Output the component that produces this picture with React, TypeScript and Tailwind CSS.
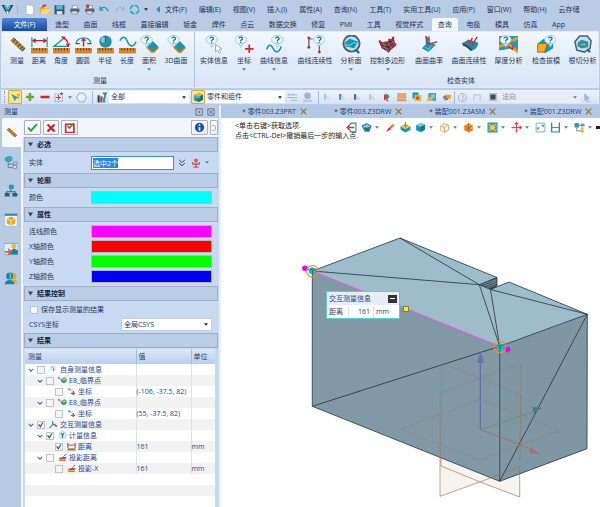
import { useEffect, useRef, type ReactNode } from "react";
import clsx from "clsx";

const TEAL = "#1497b5";

function Svg({ s = 12, children, className }: { s?: number; children: ReactNode; className?: string }) {
  return (
    <svg viewBox="0 0 20 20" width={s} height={s} fill="none" className={clsx("shrink-0", className)} aria-hidden="true">
      {children}
    </svg>
  );
}

function Ruler() {
  return (
    <>
      <rect x="1.5" y="14" width="17" height="5" fill="#e88a1c" stroke="#a35f14" strokeWidth=".5" />
      <path d="M4 14v2.500M7 14v2.500M10 14v2.500M13 14v2.500M16 14v2.500" stroke="#4b3512" strokeWidth="1" />
    </>
  );
}

function Query({ x = 8, y = 5 }: { x?: number; y?: number }) {
  return (
    <g transform={`translate(${x} ${y})`}>
      <path d="M-2 3.500 0 8 2.500 3.500Z" fill="#e6f6fc" stroke="#7fb9d2" strokeWidth=".6" />
      <ellipse rx="6" ry="4.500" fill="#e6f6fc" stroke="#7fb9d2" strokeWidth=".7" />
      <path d="M-1.800-1.200C-1.800-3.600 2.200-3.200 1.800-1 1.600 0 0 0 0 1.300M0 2.200v1.200" stroke="#155f80" strokeWidth="1.200" />
    </g>
  );
}

function DiagonalRuler() {
  return (
    <>
      <path d="M3 6 6 3 18 14 15 17Z" fill="#e88a1c" stroke="#7a5a28" strokeWidth=".8" />
      <path d="m8 4.500-2.500 2.500M10.500 7 8 9.500M13 9.500 10.500 12M15.500 12 13 14.500M17.500 14 15 16.500" stroke="#245a61" strokeWidth="1.300" />
    </>
  );
}

function Surface() {
  return (
    <>
      <path d="m13.500 7 5.500 5.500-5.500 5.500L8 12.500Z" fill={TEAL} stroke="#0c647d" strokeWidth=".8" />
      <path d="m7 12.500 6 6M19.500 13l-5.500 5.500" stroke="#db831e" strokeWidth="1.800" />
    </>
  );
}

function Cube({ c = TEAL, t = "#6fd0e2" }: { c?: string; t?: string }) {
  return (
    <>
      <path d="m2 6 9-4 7 3v9l-8 4-8-3Z" fill={c} />
      <path d="m2 6 9-4 7 3-8 4Z" fill={t} />
      <path d="m10 9 8-4v9l-8 4Z" fill="#0b6480" opacity=".7" />
    </>
  );
}

const ribbonIcons: Record<string, ReactNode> = {
  测量: <DiagonalRuler />,
  距离: <><Ruler /><path d="M2 2v11M18 2v11" stroke={TEAL} strokeWidth="1.200" /><path d="M3 6h14M6 4 3 6l3 2M14 4l3 2-3 2" stroke="#c81e2b" strokeWidth="1.300" /></>,
  角度: <><Ruler /><path d="M14 2 2 12h16" stroke={TEAL} strokeWidth="1.400" /><path d="M11 3c4 1 6 4 6 8M10 2l3.500.5M15 9.500l2.200 2 1.200-2.500" stroke="#d3202c" strokeWidth="1.400" /></>,
  圆弧: <><Ruler /><path d="M2 9C4 1 16 1 18 9" stroke={TEAL} strokeWidth="1.400" /><path d="M10 4v8M2 9h4M14 9h4M10 4 8 6M10 4l2 2" stroke="#c81e2b" strokeWidth="1.400" /></>,
  半径: <><Ruler /><circle cx="10" cy="7" r="6.500" fill={TEAL} /><circle cx="8" cy="5" r="3" fill="#74cfe3" /><path d="M10 1v7" stroke="#d3202c" strokeWidth="1.500" /></>,
  长度: <><Ruler /><path d="M2 6c3-6 6-4 8 1s6 7 9 0" stroke={TEAL} strokeWidth="1.500" /></>,
  面积: <><Surface /><Query x={7} /></>,
  "3D曲面": <><Surface /><Query x={7} /></>,
  实体信息: <><Query x={7} /><path d="M11 10v8l2.300-2 1.700 3.500 1.500-1L15 15l3-.5Z" fill="#fff" stroke="#8798a8" strokeWidth=".8" /></>,
  坐标: <><Query x={6} /><path d="M15 10v9M10.500 14.500h9" stroke="#d22630" strokeWidth="1.800" /></>,
  曲线信息: <><path d="M2 15c2-7 5-4 7 0s6 4 8-3" stroke={TEAL} strokeWidth="1.700" /><Query x={13} /></>,
  曲线连续性: <><Query x={14} /><path d="M3 14V4h4M14 11v7" stroke="#26a0b8" strokeWidth="1.300" /><path d="M3 4v9M14 12v6" stroke="#cf2935" strokeWidth=".8" /><g fill="#cf2935"><circle cx="3" cy="3" r="1.500" /><circle cx="3" cy="13" r="1.500" /><circle cx="14" cy="18" r="1.500" /></g></>,
  分析面: <><circle cx="10" cy="9" r="8.500" fill="#bce3ec" stroke="#555e65" strokeWidth="2" /><path d="m3 8 5-4 9 3-4 7-9-2Z" fill={TEAL} /><path d="m4 10 4 1 4-3 4 1" stroke="#7be0ed" /><path d="m15 16 3 3" stroke="#276f83" strokeWidth="2.500" /></>,
  控制多边形: <><path d="m1 7 7 1 8-5 3 8-8 7-7-4Z" fill="#64282f" /><path d="m3 9 7 2 8-5M4 12l7 3 7-6M5 8l5 9M10 7l5 8M14 5l4 6" stroke="#5ba1ad" strokeWidth=".8" /><g fill="#e1202c"><circle cx="2" cy="7" r="1.400" /><circle cx="8" cy="8" r="1.400" /><circle cx="12" cy="5" r="1.400" /><circle cx="16" cy="3" r="1.400" /><circle cx="18" cy="10" r="1.400" /><circle cx="14" cy="12" r="1.400" /><circle cx="11" cy="17" r="1.400" /><circle cx="5" cy="13" r="1.400" /></g></>,
  曲面曲率: <><path d="m6 3 4-2 1 8 6 1-8 8-7-4 4-4Z" fill={TEAL} /><path d="m5 13 5 2M7 7l3-1M12 10l-4 8" stroke="#7ed1df" strokeWidth=".8" /><path d="M6 1c1 4 2 7 3 9l9-3" stroke="#cf2935" strokeWidth="1.600" /></>,
  曲面连续性: <><path d="M1 9 10 5l9 3c0 5-3 8-8 9-2-5-6-7-10-8Z" fill={TEAL} /><path d="M3 10c4 1 6 3 9 6" stroke="#24485a" strokeWidth="2" /><path d="m6 9 3-4M9 11l4-8M12 12l6-10" stroke="#cf2935" strokeWidth="1.400" /></>,
  厚度分析: <><path d="M0 1h20v17l-7-4c-4 0-6 2-13 2Z" fill="#2299b5" /><path d="M0 12c8-3 9-2 13 0l7 6M14 6l6-3" stroke="#e99b22" strokeWidth="3" /><path d="m10 12 4 3 1-4" stroke="#d12b2d" strokeWidth="1.500" /><Query x={7} /></>,
  检查拔模: <><path d="m1 9 6-5 10 3v7l-8 5-8-3Z" fill={TEAL} /><path d="M1 9h10l-3 9H0Z" fill="#f5ad24" stroke="#ae6518" /><Query x={14} /></>,
  根切分析: <><path d="m2 7 5-6h8l4 5-1 8-6 4-8-2Z" fill="#bfe3ec" stroke="#535e65" strokeWidth="1.600" /><path d="m5 8 4-3 7 2v6l-7 1-4-2Z" fill={TEAL} /><path d="M8 9h6v2H8Z" fill="#ef8b24" /><path d="m15 15 3 3" stroke="#276f83" strokeWidth="2.500" /></>,
};

const group1: [string, string, boolean?][] = [
  ["测量", "w-[22px]"], ["距离", "w-[22px]"], ["角度", "w-[22px]"], ["圆弧", "w-[22px]"],
  ["半径", "w-[22px]"], ["长度", "w-[22px]"], ["面积", "w-[22px]", true], ["3D曲面", "w-[32px]"],
];
const group2: [string, string, boolean?][] = [
  ["实体信息", "w-[38px]"], ["坐标", "w-[22px]", true], ["曲线信息", "w-[38px]", true], ["曲线连续性", "w-[44px]"],
  ["分析面", "w-[28px]", true], ["控制多边形", "w-[45px]", true], ["曲面曲率", "w-[38px]"], ["曲面连续性", "w-[42px]"],
  ["厚度分析", "w-[37px]"], ["检查拔模", "w-[38px]"], ["根切分析", "w-[35px]"],
];

function Caret({ dark }: { dark?: boolean }) {
  return (
    <svg viewBox="0 0 6 4" width="4" height="3" className="shrink-0" aria-hidden="true">
      <path d="M0 0h6L3 4Z" fill={dark ? "#1c2b40" : "#5580b5"} />
    </svg>
  );
}

function RibbonItems({ items }: { items: [string, string, boolean?][] }) {
  return (
    <div className="flex h-[42px]">
      {items.map(([label, width, menu]) => (
        <button key={label} className={clsx("flex shrink-0 flex-col items-center pt-[3px]", width)}>
          <Svg s={19}>{ribbonIcons[label]}</Svg>
          <span className="mt-[2px] leading-[10px] whitespace-nowrap">{label}</span>
          {menu && <span className="mt-[2px]"><Caret /></span>}
        </button>
      ))}
    </div>
  );
}

const menus = ["文件(F)", "编辑(E)", "视图(V)", "插入(I)", "属性(A)", "查询(N)", "工具(T)", "实用工具(U)", "应用(P)", "窗口(W)", "帮助(H)", "云存储"];
const tabs = ["造型", "曲面", "线框", "直接编辑", "钣金", "焊件", "点云", "数据交换", "修复", "PMI", "工具", "视觉样式", "查询", "电极", "模具", "仿真", "App"];

const printer = (
  <>
    <path d="M6 8V3h9v5" fill="#fff" stroke="#667" />
    <rect x="2" y="8" width="17" height="7" rx="2" fill="#5c6572" />
    <path d="M5 13h10v5H5Z" fill="#e7e9ec" stroke="#667" />
  </>
);
const quickIcons: [string, ReactNode][] = [
  ["新建", <path d="M4 2h9l4 4v13H4Z" fill="#fff" stroke="#9aacbf" />],
  ["打开", <><path d="M1 6h6l2 2h9v10H3Z" fill="#f2a91e" /><path d="m4 11 3-2h12l-2 9H4Z" fill="#ffdb60" /><path d="M7 7C7 2 10 2 13 3" stroke="#db2828" strokeWidth="3" /></>],
  ["保存", <><path d="M1 2h18v17H1Z" fill="#3c5268" /><path d="M4 2h12v8H4Z" fill="#58b2d3" /><path d="M5 13h10v6H5Z" fill="#dceaf2" /></>],
  ["打印", printer],
  ["打印预览", <>{printer}<path d="M4 1h5v6H4Z" fill="#d5312e" /></>],
  ["撤销", <path d="M2 10C7 4 13 5 17 13M2 4v7h6" stroke="#1aa3ba" strokeWidth="2.400" />],
  ["重做", <path d="M18 10C13 4 7 5 3 13M18 4v7h-6" stroke="#a4b4c8" strokeWidth="2" />],
  ["刷新", <><circle cx="10" cy="10" r="7.500" stroke="#24a5c4" strokeWidth="2.600" strokeDasharray="9 2.700" /></>],
];

function TitleBar() {
  return (
    <header className="flex h-[18px] items-center">
      <Svg s={13} className="ml-[1px]">
        <path d="M1 3h5l4 5 4-5h5l-5 9-4 6-4-6Z" fill="#173f55" />
        <path d="M4 4h3l3 4 3-4h3l-4 7H8Z" fill="#38b7d0" />
        <path d="m8 12 4 1-2 6Z" fill="#f4fafc" />
      </Svg>
      <span className="ml-[3px] h-2 w-px bg-[#9bb0cc]" />
      <div className="ml-[4px] flex">
        {quickIcons.map(([name, icon]) => (
          <button key={name} aria-label={name} className="flex w-[15px] justify-center"><Svg s={11}>{icon}</Svg></button>
        ))}
      </div>
      <button aria-label="自定义" className="flex w-2 justify-center"><Caret dark /></button>
      <button aria-label="收起" className="ml-1 flex w-2 justify-center">
        <svg viewBox="0 0 5 8" width="4" height="7"><path d="M5 0v8L0 4Z" fill="#1599cf" /></svg>
      </button>
      <nav className="ml-[3px] flex gap-3 whitespace-nowrap">
        {menus.map((m) => <button key={m}>{m}</button>)}
      </nav>
    </header>
  );
}

function TabBar() {
  return (
    <nav className="flex h-[13px] pl-[2px]">
      <button className="w-[45px] rounded-t-[2px] bg-linear-to-b from-[#4f86d6] to-[#1748a5] text-white">文件(F)</button>
      <div className="flex w-[524px] justify-between pl-[2px] whitespace-nowrap">
        {tabs.map((t) => (
          <button key={t} className={clsx("px-[6px]", t === "查询" && "rounded-t-[2px] bg-[#f4f8fd]")}>{t}</button>
        ))}
      </div>
    </nav>
  );
}

const filterIcons: [string, ReactNode][] = [
  ["过滤列表", <><path d="M3 3h5v14H3Z" fill="#b0b9c4" /><path d="m10 8 7 7-4 1Z" stroke="#bac2cb" /></>],
  ["过滤实体", <><path d="M3 3h5v14H3Z" fill="#25a3ad" /><path d="M3 3h5v5H3Z" fill="#cc4d48" /><path d="m10 8 7 7-4 1Z" stroke="#a7b5c2" /></>],
  ["过滤面", <><path d="M3 3h5v14H3Z" fill="#ce3c42" /><path d="M3 3h3v14H3Z" fill="#297c8e" /><path d="m10 8 7 7-4 1Z" stroke="#a7b5c2" /></>],
  ["过滤边", <><path d="M3 3h5v14H3Z" fill="#b7c0ca" /><path d="m10 8 7 7-4 1Z" stroke="#a7b5c2" /></>],
  ["拾取", <><path d="m4 4 11 8-5 1 3 5-3 1-2-5-4 3Z" fill="#d4313d" /><path d="m7 2 9 7-5 1-2 3Z" fill="#1597b4" /></>],
  ["选项列表", <path d="M1 3h17v4H1ZM1 9h17v3H1ZM1 14h17v4H1Z" fill="#ecb24a" stroke="#d75645" strokeWidth=".7" />],
  ["图层", <><path d="M1 1h12v12H1Z" fill="#2496b0" /><path d="M5 6h13v12H5Z" fill="#f6b438" /><circle cx="11" cy="12" r="3.500" fill="#d6493a" /></>],
  ["着色", <><path d="M3 2h15v16H1Z" fill="#3ba9bf" /><path d="M2 10h9v8H2Z" fill="#f4ae38" /><circle cx="12" cy="8" r="4" fill="#87d0ce" /></>],
  ["关联", <><path d="m1 10 7-5 5 9-7 4Z" fill="#e6782c" /><path d="m10 5 9 1-3 9-6-2Z" fill="#eda331" /><path d="m4 8 8 8" stroke="#267d9b" strokeWidth="2" /></>],
];

function SelectBox({ label, value, className, muted }: { label: string; value: string; className: string; muted?: boolean }) {
  return (
    <div className={clsx("relative flex shrink-0 items-center", muted ? "bg-[#e9edf3] text-[#858b96]" : "bg-white", className)}>
      <select aria-label={label} defaultValue={value} className="h-full w-full appearance-none bg-transparent pr-2 pl-[2px] leading-[10px] outline-none">
        <option>{value}</option>
      </select>
      <span className="pointer-events-none absolute right-[3px] flex"><Caret dark={!muted} /></span>
    </div>
  );
}

function IconButton({ name, className, s = 11, children }: { name: string; className?: string; s?: number; children: ReactNode }) {
  return <button aria-label={name} className={clsx("flex shrink-0 items-center justify-center", className)}><Svg s={s}>{children}</Svg></button>;
}

function FilterBar() {
  return (
    <div className="flex h-[14px] items-center bg-linear-to-b from-[#edf3fb] to-[#d6e2f2] pl-[3px]">
      <span className="mr-[3px] h-3 border-l border-dotted border-[#8299b9]" />
      <IconButton name="选择" className="h-[14px] w-[14px] rounded-[1px] border border-[#dda93c] bg-[#ffe394]">
        <path d="m2 3 7 14 2-5 6-1Z" fill="#2ca1b6" /><path d="M12 3h7l-3 5v6" fill="#eda632" />
      </IconButton>
      <IconButton name="添加" className="w-[15px]" s={10}><path d="M10 2v16M2 10h16" stroke="#6aa536" strokeWidth="5" /></IconButton>
      <IconButton name="移除" className="w-[15px]" s={10}><path d="M1 10h18" stroke="#c92836" strokeWidth="5" /></IconButton>
      <IconButton name="框选" className="w-[14px]" s={10}><path d="M2 4h15v15H2Z" stroke="#74869f" /><path d="M9 6v10M4 11h10M15 1v5M12 3h6" stroke="#ce3641" strokeWidth="2" /></IconButton>
      <span className="mx-[2px]"><Caret /></span>
      <IconButton name="多边形" className="w-[15px]"><path d="M6 2h8l5 8-5 8H6l-5-8Z" fill="#e8f1fa" stroke="#6490b5" strokeWidth="1.300" /></IconButton>
      <span className="mx-[3px] h-[13px] w-px bg-[#a8b9d1]" />
      <IconButton name="过滤器" className="w-[13px]"><path d="M1 6h4v13H1Z" fill="#14526d" /><path d="M6 8h4v11H6Z" fill="#d22f3b" /><path d="M11 10h4v9h-4Z" fill="#2b9bb1" /><path d="M10 1h9l-3 5v5h-3V6Z" fill="#278aae" /></IconButton>
      <SelectBox label="过滤类型" value="全部" className="h-3 w-[80px]" />
      <IconButton name="零件过滤" className="ml-[2px] h-[14px] w-[14px] rounded-[1px] border border-[#dda93c] bg-[#ffe394]"><Cube c="#1688a4" t="#f0b02c" /><path d="m1 12 6-4 6 2" stroke="#43bed1" strokeWidth="3" /></IconButton>
      <SelectBox label="零件和组件过滤" value="零件和组件" className="h-3 w-[80px]" />
      <IconButton name="对齐" className="w-[15px]"><path d="M1 5h18M3 3v4M11 3v4M1 10h18M7 15h12" stroke="#aab5c5" strokeWidth="2" /></IconButton>
      <IconButton name="球体" className="w-[15px]"><circle cx="10" cy="7" r="6" fill="#a1b5cf" /><path d="M2 14h16v4H2Z" fill="#bac7da" /></IconButton>
      <span className="ml-[3px] h-[13px] w-px bg-[#a8b9d1]" />
      {filterIcons.map(([name, icon], i) => (
        <IconButton key={name} name={name} className="w-[15px]" s={i < 4 ? 8 : 10}>{icon}</IconButton>
      ))}
      <span className="h-[13px] w-px bg-[#a8b9d1]" />
      <IconButton name="定时" className="w-[15px]"><circle cx="10" cy="10" r="7.500" stroke="#a3abb6" strokeWidth="1.500" /><path d="m9 4 5 7-4 4V4" stroke="#a3abb6" /></IconButton>
      <IconButton name="曲线" className="w-[15px]" s={9}><path d="M2 17V4h7v4M11 4h5v13" stroke="#aab3bf" strokeWidth="1.700" /></IconButton>
      <IconButton name="停止" className="w-[15px]" s={10}><path d="M2 2h16v16H2Z" fill="#b8c2ce" /><path d="M5 5h10v10H5Z" fill="#424a57" /></IconButton>
      <SelectBox label="方向" value="法向" muted className="h-3 w-[80px]" />
      <IconButton name="拾取方向" className="w-[15px]"><path d="m4 2 11 10-5 1 2 5-3 1-2-5-3 3Z" fill="#a9b8cb" /><path d="m10 15 7 4" stroke="#a9b8cb" /></IconButton>
    </div>
  );
}

function Tick() {
  return (
    <svg viewBox="0 0 10 10" className="pointer-events-none absolute inset-px hidden size-[6px] peer-checked:block" fill="none" aria-hidden="true">
      <path d="m1 4 3 4 4-7" stroke="#35485f" strokeWidth="1.800" />
    </svg>
  );
}

function Check({ id, on }: { id: string; on?: boolean }) {
  return (
    <span className="relative flex size-2 shrink-0">
      <input id={id} type="checkbox" defaultChecked={on} className="peer size-2 appearance-none border border-[#bdc3cb] bg-[#f5f6f8]" />
      <Tick />
    </span>
  );
}

function Section({ title, children }: { title: string; children?: ReactNode }) {
  return (
    <section>
      <h2 className="flex h-[15px] items-center gap-1 border border-[#a0aebf] bg-[#b9cde7] pl-[3px] font-bold text-[#10213d]">
        <svg viewBox="0 0 6 5" width="5" height="5" aria-hidden="true"><path d="M0 0h6L3 5Z" fill="#3e4550" /></svg>
        {title}
      </h2>
      {children}
    </section>
  );
}

function ColorRow({ id, label, value }: { id: string; label: string; value: string }) {
  return (
    <div className="flex h-[15px] items-center">
      <label htmlFor={id} className="w-[67px] pl-[5px]">{label}</label>
      <input id={id} type="color" defaultValue={value} className="h-[13px] w-[121px] appearance-none border border-[#b3b8c2] [&::-webkit-color-swatch]:border-0 [&::-webkit-color-swatch-wrapper]:p-0" />
    </div>
  );
}

const pin = <><ellipse cx="9" cy="7" rx="7" ry="5" fill="#e3f2f9" stroke="#a5c8da" /><path d="m7 4 3 4v5" stroke="#2f829f" strokeWidth="2" /></>;
const critical = <><path d="m7 7 7-4 5 3v6l-6 4-6-3Z" fill="#1c9c9b" /><path d="m9 8 5-3 4 2-5 4Z" fill="#ebc53c" /><path d="m1 3 8 8" stroke="#4b6b82" strokeWidth="1.500" /><circle cx="2" cy="4" r="2" fill="#df4242" /></>;
const coord = <><path d="m3 2 5 6 5-2" stroke="#8ac0d8" strokeWidth="2" /><circle cx="5" cy="5" r="3" fill="#73b7d1" /><path d="M14 9v9M9 14h9" stroke="#df3c43" strokeWidth="3" /></>;
const project = <><path d="M3 10h14v8H3Z" fill="#bd5448" /><path d="M1 15h17" stroke="#e5b44c" strokeWidth="3" /><path d="M8 10h11M12 8l6-6" stroke="#cb3440" strokeWidth="2" /></>;

type TreeRow = { level: number; label: string; icon: ReactNode; checked?: boolean; leaf?: boolean; value?: string; unit?: string };
const rows: TreeRow[] = [
  { level: 0, label: "自身测量信息", icon: pin },
  { level: 1, label: "E8_临界点", icon: critical },
  { level: 2, label: "坐标", icon: coord, leaf: true, value: "(-106, -37.5, 82)" },
  { level: 1, label: "E8_临界点", icon: critical },
  { level: 2, label: "坐标", icon: coord, leaf: true, value: "(55, -37.5, 82)" },
  { level: 0, label: "交互测量信息", checked: true, icon: <><path d="M8 2v8l-7 8M9 9l9 5" stroke="#2295b1" strokeWidth="2.500" /><path d="m11 9 6 6" stroke="#d5424a" strokeWidth="3" /></> },
  { level: 1, label: "计量信息", checked: true, icon: <><circle cx="10" cy="9" r="8" fill="#dff1f8" stroke="#68a9c5" /><path d="m7 5 3 4 3-4M10 9v6" stroke="#16678a" strokeWidth="2.500" /></> },
  { level: 2, label: "距离", checked: true, leaf: true, value: "161", unit: "mm", icon: <><path d="M1 14h18v5H1Z" fill="#a87a3c" /><path d="M2 2v11M18 2v11" stroke="#28445b" strokeWidth="2" /><path d="M3 7h14" stroke="#ce3540" strokeWidth="2" /></> },
  { level: 1, label: "投影距离", icon: project },
  { level: 2, label: "投影-X", icon: project, leaf: true, value: "161", unit: "mm" },
];
const indents = ["pl-[2px]", "pl-[11px]", "pl-[20px]"];

function ResultTable() {
  return (
    <table className="mx-px mt-px w-[190px] table-fixed border-collapse text-left text-[#27448a]">
      <colgroup><col className="w-[111px]" /><col className="w-[55px]" /><col className="w-[24px]" /></colgroup>
      <thead>
        <tr className="h-[15px] bg-linear-to-b from-[#dce9f8] to-[#b9d0ec] text-[#2a3c58]">
          <th className="border-r border-[#a9bcd5] p-0 pl-[3px] font-normal">测量</th>
          <th className="border-r border-[#a9bcd5] p-0 pl-[2px] font-normal">值</th>
          <th className="p-0 pl-[2px] font-normal">单位</th>
        </tr>
      </thead>
      <tbody>
        {rows.map((r, i) => (
          <tr key={i} className="h-[11px] odd:bg-white even:bg-[#f2f2f3]">
            <td className="border-r border-[#dce1ec] p-0">
              <div className={clsx("flex h-[11px] items-center leading-[11px] whitespace-nowrap", indents[r.level])}>
                <span className="mr-[2px] flex w-2 justify-center">
                  {!r.leaf && <svg viewBox="0 0 8 5" width="6" height="4" fill="none"><path d="m1 1 3 3 3-3" stroke="#4372a5" strokeWidth="1.500" /></svg>}
                </span>
                <Check id={`row-${i}`} on={r.checked} />
                <label htmlFor={`row-${i}`} className="flex items-center gap-[2px] pl-1"><Svg s={9}>{r.icon}</Svg>{r.label}</label>
              </div>
            </td>
            <td className="border-r border-[#dce1ec] p-0 leading-[11px] whitespace-nowrap">{r.value}</td>
            <td className="p-0 leading-[11px]">{r.unit}</td>
          </tr>
        ))}
        {[0, 1, 2].map((n) => (
          <tr key={n} className="h-[11px] odd:bg-white even:bg-[#f2f2f3]"><td colSpan={3} className="p-0" /></tr>
        ))}
      </tbody>
    </table>
  );
}

const railIcons: [string, ReactNode][] = [
  ["管理器", <><path d="m1 4 6-3 5 2v5L6 11 1 8Z" fill="#38a5c4" /><path d="M6 11v7h6M6 13h8" stroke="#61738c" strokeWidth="1.200" /><path d="M14 10h5v3h-5ZM13 15h5v4h-5Z" fill="#dcebfa" stroke="#61738c" /></>],
  ["装配", <><path d="M7 1h7v6H7Z" fill="#1e9ab5" /><path d="M10 7v4M4 15v-4h12v4" stroke="#4a6078" strokeWidth="1.500" /><path d="M1 13h7v5H1ZM12 13h7v5h-7Z" fill="#245e80" /></>],
  ["视觉", <><path d="M1 1h18v18H1Z" fill="#eef8fc" stroke="#8dbdd0" /><path d="M1 1h18v3H1Z" fill="#298fae" /><path d="m4 8 6-3 6 3v7l-6 3-6-3Z" fill="#e9a51f" /><path d="m4 8 6 3 6-3M10 11v7" stroke="#fff4b9" strokeWidth="1.200" /></>],
  ["视图", <><path d="M0 2h20v16H0Z" fill="#dceffa" stroke="#6b9bb4" /><path d="m7 15 7-6 6 3v6H7Z" fill="#18849e" /><circle cx="14" cy="6" r="3.500" fill="#f2b33b" /><path d="M1 14h8M6 10l4 4-4 4" stroke="#e35d2d" strokeWidth="2.500" /></>],
  ["角色", <><circle cx="13" cy="7" r="5" fill="#e6a72c" /><path d="m8 17 4-5h4l4 6Z" fill="#e6a72c" /><circle cx="8" cy="7" r="5" fill="#1687a5" /><path d="M1 19c1-5 4-6 7-6s6 2 7 6Z" fill="#1687a5" /><path d="M7 4c3 0 3 5 1 7" stroke="#7dd2e1" strokeWidth="1.500" /></>],
];

function SidePanel() {
  const entity = useRef<HTMLInputElement>(null);
  useEffect(() => {
    entity.current?.focus();
    entity.current?.select();
  }, []);
  const tool = "h-[15px] rounded-[1px] border border-[#aab2bf] bg-linear-to-b from-white to-[#edf2f8]";
  return (
    <aside className="flex w-[221px] shrink-0 flex-col border-r-2 border-[#e8f0fa]">
      <div className="flex h-[13px] items-center pr-[2px] pl-1">
        <h1 className="grow">测量</h1>
        <IconButton name="停靠" className="w-3" s={8}><path d="M2 2h16v16H2Z" stroke="#50617b" strokeWidth="2" /><path d="M7 10h6M10 7v6" stroke="#50617b" strokeWidth="2" /></IconButton>
        <IconButton name="关闭" className="w-3" s={8}><path d="M2 2h16v16H2ZM5 5l10 10M15 5 5 15" stroke="#50617b" strokeWidth="2" /></IconButton>
      </div>
      <div className="flex grow">
        <nav className="flex w-[21px] shrink-0 flex-col bg-[#b8cbe5]">
          <button aria-label="测量" className="ml-[2px] flex h-[29px] items-center justify-center rounded-l-[2px] bg-[#f6f9fd]"><Svg s={13}><DiagonalRuler /></Svg></button>
          {railIcons.map(([name, icon]) => <IconButton key={name} name={name} className="h-[29px]" s={14}>{icon}</IconButton>)}
        </nav>
        <div className="min-w-0 grow border-l-2 border-[#f2f6fc] bg-[#c8daf1] pr-[1px] pl-px">
          <div className="-ml-px flex h-[19px] items-center bg-[#f2f6fb] pl-px">
            <IconButton name="确定" className={clsx(tool, "w-[17px]")}><path d="m2 10 5 6L18 4" stroke="#22a535" strokeWidth="3.500" /></IconButton>
            <IconButton name="取消" s={10} className={clsx(tool, "ml-[2px] w-[16px]")}><path d="m3 3 14 14M17 3 3 17" stroke="#d21e2b" strokeWidth="4.500" /></IconButton>
            <IconButton name="应用" className={clsx(tool, "ml-[2px] w-[17px]")}><path d="M3 4h15v15H3Z" fill="#fff" stroke="#d6252a" strokeWidth="3" /><path d="m6 7 4 4 8-9" stroke="#2ba33a" strokeWidth="3" /></IconButton>
            <IconButton name="信息" className={clsx(tool, "ml-auto w-[17px]")}><circle cx="10" cy="10" r="8.500" fill="#1855ad" /><path d="M10 4v3M10 9v7" stroke="#fff" strokeWidth="3" /></IconButton>
            <IconButton name="更多" className={clsx(tool, "ml-[2px] w-2")} s={6}><path d="M3 1h8c6 4 6 14 0 18H3" stroke="#d99145" strokeWidth="3" /></IconButton>
          </div>
          <Section title="必选">
            <div className="flex h-[21px] items-center">
              <label htmlFor="entity" className="w-[67px] pl-[5px]">实体</label>
              <input id="entity" ref={entity} defaultValue="选中2个" className="h-[14px] w-[83px] border border-[#3f8bd8] bg-white pl-[1px] leading-[12px] outline-none selection:bg-[#2388e8] selection:text-white" />
              <IconButton name="展开" className="ml-[3px] w-[10px]" s={8}><path d="m3 2 7 7 7-7M3 10l7 7 7-7" stroke="#263c57" strokeWidth="2.500" /></IconButton>
              <IconButton name="语音" className="ml-[3px] w-[11px]" s={10}><circle cx="10" cy="5" r="4" fill="#d55c62" /><path d="M3 8c0 7 14 7 14 0M10 9v9M5 18h10M2 12h16" stroke="#ce5660" strokeWidth="2.500" /></IconButton>
              <span className="ml-[4px]"><Caret /></span>
            </div>
          </Section>
          <Section title="轮廓"><div className="pt-[2px] pb-[2px]"><ColorRow id="outline" label="颜色" value="#00ffff" /></div></Section>
          <Section title="属性">
            <div className="pt-[2px] pb-[2px]">
              <ColorRow id="line" label="连线颜色" value="#ff00ff" />
              <ColorRow id="x-axis" label="X轴颜色" value="#ff0000" />
              <ColorRow id="y-axis" label="Y轴颜色" value="#00ff00" />
              <ColorRow id="z-axis" label="Z轴颜色" value="#0000ff" />
            </div>
          </Section>
          <Section title="结果控制">
            <div className="flex h-[17px] items-center gap-[3px] pl-[6px]">
              <Check id="keep" /><label htmlFor="keep">保存显示测量的结果</label>
            </div>
            <div className="flex h-[15px] items-start">
              <span className="w-[97px] pl-[5px] leading-[13px]">CSYS坐标</span>
              <SelectBox label="CSYS坐标" value="全局CSYS" className="h-[13px] w-[91px] border border-[#c3cfde]" />
            </div>
          </Section>
          <Section title="结果"><ResultTable /></Section>
        </div>
      </div>
    </aside>
  );
}

const viewIcons: [string, string, boolean, ReactNode][] = [
  ["退出", "w-[15px]", false, <><path d="M8 2h10v16H8v-3M8 5V2" stroke="#1a92ac" strokeWidth="2" /><path d="M15 10H2M7 5l-5 5 5 5" stroke="#da3840" strokeWidth="2.500" /></>],
  ["显示", "w-[24px]", true, <><path d="m1 7 9-5 9 5-3 10-9 1Z" fill="#2387a3" /><path d="m3 8 8-4 6 4-9 3Z" fill="#90c9db" /><path d="m8 10 6 7" stroke="#3a4d67" strokeWidth="2" /></>],
  ["画笔", "w-[15px]", false, <><path d="m7 11 7-8 4 3-8 7Z" fill="#d67847" /><path d="m2 18 5-8 4 3Z" fill="#c43839" /><path d="m13 4 4 3" stroke="#f1ba52" strokeWidth="2" /></>],
  ["定向", "w-[15px]", false, <><path d="m1 8 9-4 9 4v6l-9 5-9-5Z" fill={TEAL} /><path d="m1 8 9-4 9 4-9 5Z" fill="#f3ca3a" /><path d="M10 0v8M7 5l3 4 3-4" stroke="#cb8b1b" strokeWidth="2" /></>],
  ["着色", "w-[24px]", true, <Cube />],
  ["线框", "w-[24px]", true, <><path d="m3 7 7-4 7 3v9l-7 4-7-4ZM3 7l7 3 7-4M10 10v9" stroke="#e0a037" strokeWidth="1.500" /><circle cx="13" cy="10" r="6" stroke="#8dbfd4" /></>],
  ["材质", "w-[24px]", true, <><path d="m2 7 8-5 8 5v8l-8 4-8-4Z" fill="#ed9d26" /><path d="m3 7 14 9M17 6 4 15M10 2v16" stroke="#a85624" strokeWidth="1.500" /></>],
  ["缩放", "w-[24px]", true, <><path d="M2 2h16v16H2Z" fill="#a8dbe6" stroke="#2588a3" strokeWidth="2" /><circle cx="10" cy="10" r="6" fill="#f0cb45" stroke="#806b40" strokeWidth="1.500" /></>],
  ["移动", "w-[24px]", true, <><path d="m10 2 8 8-8 8-8-8Z" stroke="#7899ad" /><path d="M10 1v18M1 10h18M7 4l3-3 3 3M16 7l3 3-3 3" stroke="#d74950" strokeWidth="2" /></>],
  ["视窗", "w-[15px]", false, <><path d="M2 2h16v16H2Z" fill="#f4f9fb" stroke="#6eadc1" strokeWidth="1.500" /><path d="M5 14v-3h3M12 6h3v3" stroke="#546a80" strokeWidth="2" /></>],
  ["标注", "w-[24px]", true, <><path d="M3 1v18M17 1v18" stroke="#1793af" strokeWidth="2.500" /><path d="M4 10h12" stroke="#d64e54" strokeWidth="2" /><path d="M4 18h12" stroke="#1793af" strokeWidth="2" /></>],
  ["树", "w-[24px]", true, <><path d="M1 2h8v8H1Z" fill="#3893ac" /><path d="M5 10v6h8M9 6h6" stroke="#5c6b7b" strokeWidth="1.500" /><path d="M12 3h7v5h-7Z" fill="#7d8d9c" /><circle cx="15" cy="12" r="2.500" fill="#e7ac2b" /><circle cx="15" cy="17" r="2.500" fill="#e7ac2b" /></>],
];

function Model() {
  return (
    <svg viewBox="221 144 379 363" className="block w-full" fill="none" role="img" aria-label="三维模型">
      <path d="m440 459.300 79.700-.7V498l-39.400-14.800L440 497.300Z" fill="#f6f4f1" />
      <path d="M312.300 272 499.700 347.300V482.300L312.300 407.300Z" fill="#8099a5" />
      <path d="M499.700 347.300 587.300 315.300 587 449.700 499.700 482.300Z" fill="#7e97a3" />
      <path d="M312.300 272 400 239 497 278.500v8L490.500 290.500 509 283 587.300 315.300 499.700 347.300Z" fill="#9ebdca" />
      <path d="M479.300 285.700 497 278.500V287l-6.500 3.500Z" fill="#435a65" />
      <path d="m481 285.500 16-5M484 287l13-5M486 289l11-5" stroke="#a9c1ca" strokeWidth=".5" />
      <g stroke="#22343c" strokeWidth=".8" strokeLinejoin="round">
        <path d="M312.300 272 400 239 497 278.500V287L490.500 290.500 509 283 587.300 315.300 587 449.700 499.700 482.300 312.300 407.300Z" />
        <path d="M312.300 272 479.300 285.700 400 239M479.300 285.700l11.200 4.800L499.700 347.300 479.300 285.700 497 278.500M490.500 290.500 587.300 315.300 499.700 347.300V482.300L587.300 315.300M499.700 347.300 312.300 407.300" />
      </g>
      <g stroke="#a56e4d" strokeWidth=".8">
        <path d="m401 430.300 79-30 79.300 31-79.300 30ZM441.700 364l79 31.700-1 65M440 459V394l80.700-30v96M441.700 364 440.700 460" opacity=".38" />
        <path d="M440 459v38.300l40.300-14.500 39.400-15V498l-39.400-15-39.300-16v-8" opacity=".8" />
      </g>
      <path d="M480.300 430.500V360" stroke="#5967ad" /><path d="m477 364 3.300-11.500 3.700 11.500Z" fill="#6572ad" />
      <path d="m480.300 430.500 57-19" stroke="#5f9979" /><path d="m532 408 10 1-8 5Z" fill="#477c72" />
      <path d="m480.300 430.500 52 20" stroke="#ae6a73" /><path d="m531 448 9 7-11-.5Z" fill="#a6707a" />
      <path d="M312.300 272 499.700 347.300" stroke="#e45bdf" strokeWidth="1.100" />
      <path d="m305 269 7 3M500 347l8 3.500" stroke="#d719dc" strokeWidth="1.200" />
      <circle cx="304.800" cy="269.300" r="2.700" fill="#f000ef" /><circle cx="507.700" cy="350.500" r="2.700" fill="#f000ef" />
      <g fill="#25b5bb"><path d="m309 270 3-2 4 2v5l-3 1-4-2ZM496.500 346l3-2 4 2v5l-3 1-4-2Z" /></g>
      <path d="m310 270 2.500 1 3-1M312.500 271v4M497.500 346l2.500 1 3-1M500 347v4" stroke="#10666d" strokeWidth=".8" />
      <circle cx="312.500" cy="272.300" r="5.800" stroke="#f08a2c" strokeWidth="1.200" /><circle cx="500" cy="347.800" r="5.800" stroke="#f08a2c" strokeWidth="1.200" />
      <path d="m398 306 7 3" stroke="#28c8d5" /><path d="M403.500 307.500h5v5h-5Z" fill="#f8ef17" stroke="#6a6838" strokeWidth=".8" />
    </svg>
  );
}

const documents = [
  ["零件003.Z3PRT", "w-[92px]"], ["零件003.Z3DRW", "w-[95px]"], ["装配001.Z3ASM", "w-[95px]"], ["装配001.Z3DRW", "w-[83px]"],
];

function Viewport() {
  return (
    <main className="flex min-w-0 grow flex-col bg-white">
      <nav className="flex h-[13px] items-center bg-[#b4c8e3] pl-3 text-[#223f75]">
        {documents.map(([name, w]) => (
          <div key={name} className={clsx("flex shrink-0 items-center gap-1 pl-[9px] whitespace-nowrap", w)}>
            <button>* {name}</button>
            <IconButton name={`关闭 ${name}`} s={7}><path d="m2 2 16 16M18 2 2 18" stroke="#916f27" strokeWidth="3" /></IconButton>
          </div>
        ))}
      </nav>
      <div className="relative flex h-[25px] items-start overflow-hidden pt-1 pl-[123px] text-[#222]">
        <p className="absolute top-[3px] left-[14px] leading-[10px] whitespace-nowrap">&lt;单击右键&gt;获取选项.<br />点击&lt;CTRL-Del&gt;撤销最后一步的输入点.</p>
        {viewIcons.map(([name, w, menu, icon]) => (
          <button key={name} aria-label={name} className={clsx("flex shrink-0 items-center gap-[3px] pl-[2px]", w)}>
            <Svg s={11}>{icon}</Svg>{menu && <Caret />}
          </button>
        ))}
        <span className="mt-[4px] h-[3px] w-1 shrink-0 bg-[#222]" />
      </div>
      <div className="relative">
        <Model />
        <div className="absolute top-[148px] left-[105px] w-[74px] border border-[#55ced8] bg-white text-[#25447d]">
          <div className="flex h-[13px] items-center justify-between bg-[#e8ecf3] pr-[2px] pl-[2px]">
            <span>交互测量信息</span>
            <button aria-label="折叠" className="flex h-2 w-[9px] items-center justify-center bg-[#333]"><span className="h-px w-[5px] bg-white" /></button>
          </div>
          <dl className="flex h-[13px] items-center">
            <dt className="w-[22px] border-r border-[#dce2eb] pl-[2px]">距离</dt>
            <dd className="w-[25px] border-r border-[#dce2eb] pr-[3px] text-right">161</dd>
            <dd className="pl-[2px]">mm</dd>
          </dl>
        </div>
      </div>
    </main>
  );
}

export default function App() {
  return (
    <div lang="zh-CN" className="flex h-screen flex-col overflow-hidden bg-[#b9cbe5] font-['Open_Sans','Noto_Sans_CJK_SC',sans-serif] text-[7px] leading-[11px] text-[#1f3555]">
      <TitleBar />
      <TabBar />
      <div className="mx-px flex h-[57px] shrink-0 rounded-[1px] border border-[#dfeaf7] bg-linear-to-b from-[#f2f7fd] via-[#e2ecf8] to-[#d8e5f5]">
        <section className="flex w-[193px] shrink-0 flex-col border-r border-[#b2c4dc] pl-[4px]">
          <RibbonItems items={group1} />
          <h2 className="pt-px text-center">测量</h2>
        </section>
        <section className="min-w-0 grow">
          <RibbonItems items={group2} />
          <h2 className="pt-px pl-[252px]">检查实体</h2>
        </section>
      </div>
      <div className="mt-[2px] mb-px shrink-0 px-px"><FilterBar /></div>
      <div className="flex min-h-0 grow">
        <SidePanel />
        <Viewport />
      </div>
    </div>
  );
}
